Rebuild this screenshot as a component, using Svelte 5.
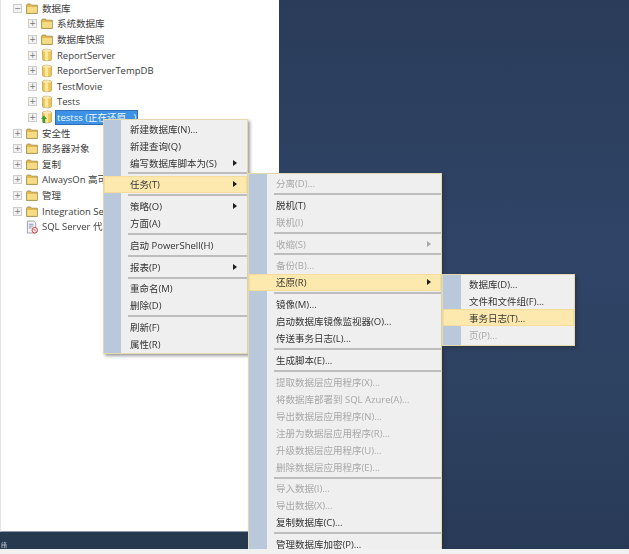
<script>
  const tree = [
    { label: '数据库', level: 0, icon: 'folder', toggle: '−' },
    { label: '系统数据库', level: 1, icon: 'folder', toggle: '+' },
    { label: '数据库快照', level: 1, icon: 'folder', toggle: '+' },
    { label: 'ReportServer', level: 1, icon: 'db', toggle: '+' },
    { label: 'ReportServerTempDB', level: 1, icon: 'db', toggle: '+' },
    { label: 'TestMovie', level: 1, icon: 'db', toggle: '+' },
    { label: 'Tests', level: 1, icon: 'db', toggle: '+' },
    { label: 'testss (正在还原...)', level: 1, icon: 'restore', toggle: '+', selected: true },
    { label: '安全性', level: 0, icon: 'folder', toggle: '+' },
    { label: '服务器对象', level: 0, icon: 'folder', toggle: '+' },
    { label: '复制', level: 0, icon: 'folder', toggle: '+' },
    { label: 'AlwaysOn 高可用性', level: 0, icon: 'folder', toggle: '+' },
    { label: '管理', level: 0, icon: 'folder', toggle: '+' },
    { label: 'Integration Services', level: 0, icon: 'folder', toggle: '+' },
    { label: 'SQL Server 代理', level: 0, icon: 'agent', toggle: '' }
  ];

  const sep = { sep: true };

  const mainMenu = [
    { label: '新建数据库(N)...' },
    { label: '新建查询(Q)' },
    { label: '编写数据库脚本为(S)', arrow: true },
    sep,
    { label: '任务(T)', arrow: true, active: true },
    sep,
    { label: '策略(O)', arrow: true },
    { label: '方面(A)' },
    sep,
    { label: '启动 PowerShell(H)' },
    sep,
    { label: '报表(P)', arrow: true },
    sep,
    { label: '重命名(M)' },
    { label: '删除(D)' },
    sep,
    { label: '刷新(F)' },
    { label: '属性(R)' }
  ];

  const taskMenu = [
    { label: '分离(D)...', off: true },
    sep,
    { label: '脱机(T)' },
    { label: '联机(I)', off: true },
    sep,
    { label: '收缩(S)', arrow: true, off: true },
    sep,
    { label: '备份(B)...', off: true },
    { label: '还原(R)', arrow: true, active: true },
    sep,
    { label: '镜像(M)...' },
    { label: '启动数据库镜像监视器(O)...' },
    { label: '传送事务日志(L)...' },
    sep,
    { label: '生成脚本(E)...' },
    sep,
    { label: '提取数据层应用程序(X)...', off: true },
    { label: '将数据库部署到 SQL Azure(A)...', off: true },
    { label: '导出数据层应用程序(N)...', off: true },
    { label: '注册为数据层应用程序(R)...', off: true },
    { label: '升级数据层应用程序(U)...', off: true },
    { label: '删除数据层应用程序(E)...', off: true },
    sep,
    { label: '导入数据(I)...', off: true },
    { label: '导出数据(X)...', off: true },
    { label: '复制数据库(C)...' },
    sep,
    { label: '管理数据库加密(P)...' }
  ];

  const restoreMenu = [
    { label: '数据库(D)...' },
    { label: '文件和文件组(F)...' },
    { label: '事务日志(T)...', active: true },
    { label: '页(P)...', off: true }
  ];
</script>

{#snippet menu(items, cls)}
  <div class="menu {cls}">
    {#each items as item}
      {#if item.sep}
        <div class="sep"></div>
      {:else}
        <div class="item" class:active={item.active} class:off={item.off}>
          <span>{item.label}</span>
          {#if item.arrow}<i class="arrow"></i>{/if}
        </div>
      {/if}
    {/each}
  </div>
{/snippet}

{#snippet icon(kind)}
  {#if kind === 'folder'}
    <svg width="12" height="11" viewBox="0 0 12 11">
      <path d="M.5 2.2 1.3 1h3.2l.9 1.2h6v8.3H.5z" fill="#e3b94a" stroke="#a08a50" stroke-width=".8" />
      <path d="M1.2 4h9.7v5.8H1.2z" fill="#f6dc84" />
    </svg>
  {:else if kind === 'agent'}
    <svg width="13" height="14" viewBox="0 0 13 14">
      <path d="M1.5 .5h7l2 2v11h-9z" fill="#f4f4f6" stroke="#9a9aa8" />
      <path d="M3 4h5M3 6h5M3 8h3" stroke="#8a8fa8" />
      <circle cx="9.5" cy="10.5" r="3" fill="#f2f2f2" stroke="#c33" />
      <path d="m8.2 9.2 2.6 2.6" stroke="#c33" />
    </svg>
  {:else}
    <svg width="12" height="14" viewBox="0 0 12 14">
      <path d="M1.5 2.5C1.5.8 10.500.8 10.500 2.500v9c0 1.700-9 1.700-9 0z" fill="#f0c64e" stroke="#bda56a" stroke-width=".8" />
      <path d="M4 3v9.500h3.200V3z" fill="#fbe6a2" />
      <ellipse cx="6" cy="2.400" rx="4" ry="1.200" fill="#fae9b2" />
      {#if kind === 'restore'}
        <path d="M3 5.500 6 9H4.200v4H1.800V9H0z" fill="#3f9b2c" />
      {/if}
    </svg>
  {/if}
{/snippet}

<div class="screen">
  <div class="main">
    <div class="side">
      <div class="tree">
        {#each tree as node}
          <div class="node" class:child={node.level === 1}>
            {#if node.toggle}<span class="toggle">{node.toggle}</span>{:else}<span class="toggle blank"></span>{/if}
            <span class="icon">{@render icon(node.icon)}</span>
            <span class="label" class:selected={node.selected}>{node.label}</span>
          </div>
        {/each}
      </div>
      <div class="status">绪</div>
    </div>
    <div class="desk"></div>

    {@render menu(mainMenu, 'first')}
    {@render menu(taskMenu, 'second')}
    {@render menu(restoreMenu, 'third')}
  </div>
  <div class="strip"></div>
</div>

<style>
  :global(body) {
    margin: 0;
    background: #f1f1f1;
  }

  .screen {
    width: 629px;
    height: 554px;
    display: flex;
    flex-direction: column;
    overflow: hidden;
    font-family: "Open Sans", "Noto Sans CJK SC", sans-serif;
    font-size: 9.5px;
    color: #3c3c3c;
    filter: blur(0.55px);
  }

  .main {
    position: relative;
    flex: 1;
    display: flex;
    overflow: hidden;
  }

  .strip {
    height: 5px;
    background: #f1f1f1;
  }

  .side {
    width: 279px;
    display: flex;
    flex-direction: column;
  }

  .tree {
    flex: 1;
    background: #fff;
    border-left: 1px solid #e4e4e4;
    border-bottom: 1px solid #8f9aaa;
    padding-top: 0.5px;
  }

  .status {
    box-sizing: border-box;
    height: 17px;
    padding: 9px 0 0 1px;
    background: #27394f;
    color: #b9c3cf;
    font-size: 6px;
    line-height: 8px;
  }

  .desk {
    flex: 1;
    background: linear-gradient(180deg, #2a3c59 0%, #2f4467 45%, #2d4160 75%, #283a56 100%);
  }

  .node {
    height: 15.6px;
    display: flex;
    align-items: center;
    padding-left: 12px;
    white-space: nowrap;
  }

  .node.child {
    padding-left: 27px;
  }

  .toggle {
    width: 7px;
    height: 7px;
    flex: none;
    border: 1px solid #cdcdcd;
    background: #f2f2f2;
    color: #777;
    font: 8px/7px "DejaVu Sans", sans-serif;
    text-align: center;
  }

  .toggle.blank {
    visibility: hidden;
  }

  .icon {
    width: 12px;
    margin-left: 4px;
    margin-right: 3px;
    display: flex;
    justify-content: center;
    flex: none;
  }

  .label {
    padding: 1px 1px;
    line-height: 13px;
  }

  .label.selected {
    background: #3c93e6;
    color: #f4f8ff;
    border: 1px solid #2f6fb5;
    padding: 0 1px;
    margin-left: -1px;
  }

  .menu {
    position: absolute;
    box-sizing: border-box;
    background: linear-gradient(90deg, #b9c8da var(--gutter), #efefef var(--gutter));
    border: 1px solid #e4d9ad;
    box-shadow: 2px 2px 3px rgba(40, 40, 40, 0.45);
  }

  .first {
    --gutter: 17px;
    --indent: 26px;
    left: 103px;
    top: 119px;
    width: 145px;
    height: 235px;
  }

  .second {
    --gutter: 18px;
    --indent: 27px;
    left: 248px;
    top: 173px;
    width: 194px;
    height: 400px;
    padding-top: 0.5px;
  }

  .third {
    --gutter: 18px;
    --indent: 26px;
    left: 442px;
    top: 274px;
    width: 133px;
    height: 72px;
  }

  .item {
    height: 17px;
    display: flex;
    align-items: center;
    justify-content: space-between;
    padding: 0 10px 0 var(--indent);
    white-space: nowrap;
    color: #333;
  }

  .item.off {
    color: #a8a8a8;
  }

  .item.active {
    background: #fde8ad;
    box-shadow: inset 0 0 0 1px #f5dc9a;
  }

  .arrow {
    width: 0;
    height: 0;
    border-left: 4px solid #1c1c1c;
    border-top: 3px solid transparent;
    border-bottom: 3px solid transparent;
  }

  .item.off .arrow {
    border-left-color: #a8a8a8;
  }

  .sep {
    height: 2px;
    margin: 1.400px 0 1.400px calc(var(--indent) - 2px);
    background: #bdbdbd;
  }
</style>
